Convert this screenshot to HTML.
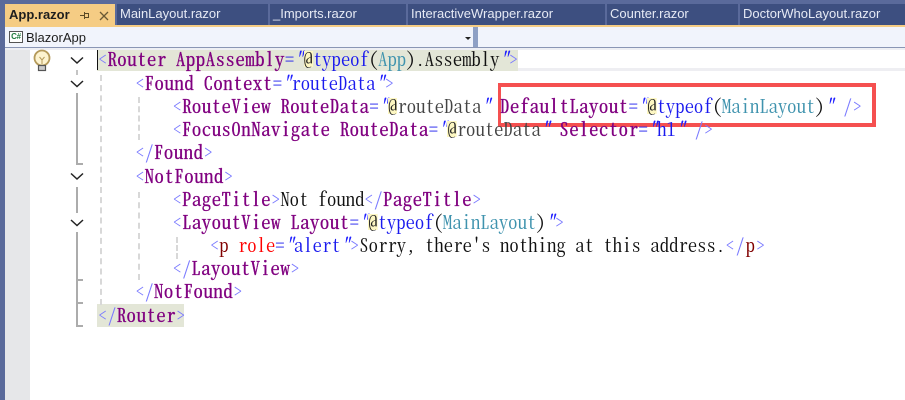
<!DOCTYPE html>
<html><head><meta charset="utf-8">
<style>
html,body{margin:0;padding:0}
body{width:905px;height:400px;overflow:hidden;position:relative;background:#fff;font-family:"Liberation Sans",sans-serif}
div{position:absolute;box-sizing:border-box}
.tab{top:4px;height:21px;background:#3d4f80;color:#e6eaf5;font-size:13px;line-height:20px;padding-left:3px;white-space:pre}
.l{left:98px;height:23px;line-height:22px;font-family:"Noto Serif CJK SC","Liberation Mono",monospace;font-feature-settings:"hwid";font-size:18.670px;white-space:pre;color:#111;z-index:6}
.l span{white-space:pre}
.b{color:#7a7aff}
.t{color:#800080;-webkit-text-stroke:.35px #800080;letter-spacing:.565px}
.a{color:#ff0000}
.q{color:#2020ff;font-style:italic}
.v{color:#1515ee}
.k{color:#1a1aee}
.c{color:#3f93ae}
.at{background:linear-gradient(#fdf7c2,#fdf7c2) center/100% 16px no-repeat;color:#222}
.dash{width:0;border-left:2px dashed #d8d8d8}
</style></head>
<body>
<div style="left:0;top:0;width:905px;height:47px;background:#5a6a9b"></div>
<div style="left:5px;top:4px;width:110px;height:23px;background:#f5cc84"></div>
<div style="left:9px;top:4px;font-size:13px;font-weight:bold;line-height:21px;color:#1e1e1e;z-index:2">App.razor</div>
<svg style="position:absolute;left:78px;top:8px;z-index:2" width="32" height="16" viewBox="0 0 32 16"><path d="M2 7.500H6M6.500 4V11M6.500 5.500H10.500V9.500H6.500" fill="none" stroke="#5b4a26" stroke-width="1"/><path d="M22 4L30 12M30 4L22 12" stroke="#6b5a36" stroke-width="1.300" fill="none"/></svg>

<div class="tab" style="left:117px;width:151px">MainLayout.razor</div>
<div class="tab" style="left:270px;width:136px">_Imports.razor</div>
<div class="tab" style="left:408px;width:197px">InteractiveWrapper.razor</div>
<div class="tab" style="left:607px;width:131px">Counter.razor</div>
<div class="tab" style="left:740px;width:165px">DoctorWhoLayout.razor</div>
<div style="left:5px;top:25px;width:900px;height:2px;background:#f5cc84"></div>

<div style="left:5px;top:27px;width:900px;height:20px;background:#8ea0c5"></div>
<div style="left:5px;top:27px;width:468px;height:20px;background:#f1f4fc"></div>
<div style="left:478px;top:27px;width:427px;height:20px;background:#f1f4fc"></div>
<div style="left:5px;top:47px;width:900px;height:1px;background:#8a96b5"></div>
<div style="left:5px;top:48px;width:900px;height:2px;background:#eeeff4"></div>
<div style="left:465px;top:37px;width:0;height:0;border-left:3.500px solid transparent;border-right:3.500px solid transparent;border-top:3.500px solid #222"></div>
<div style="left:9px;top:31px;width:14px;height:12px;border:1px solid #555;background:#fff;color:#1c7a3c;font:bold 8px/10px 'Liberation Sans',sans-serif;text-align:center;letter-spacing:-.3px">C#</div>
<div style="left:26px;top:28px;font-size:13px;line-height:19px;color:#1e1e1e">BlazorApp</div>

<div style="left:0;top:47px;width:5px;height:353px;background:#5a6a9b"></div>
<div style="left:5px;top:50px;width:25px;height:350px;background:#e6e7e9"></div>
<div style="left:97px;top:50px;width:808px;height:21px;border-bottom:3px solid #eeeef2"></div>
<div style="left:97px;top:50px;width:421px;height:21px;background:#e3e6d7"></div>
<div style="left:97px;top:304px;width:87px;height:23px;background:#e3e6d7"></div>
<div style="left:97px;top:50px;width:1px;height:20px;background:#111;z-index:7"></div>

<svg style="position:absolute;left:32px;top:49px" width="20" height="23" viewBox="0 0 20 23"><circle cx="10" cy="9" r="7.500" fill="#fdf3cf" stroke="#b59a5a" stroke-width="1.800"/><path d="M7.500 8L10 11L12.500 8M10 11V15" fill="none" stroke="#b59a5a" stroke-width="1"/><rect x="6.500" y="16.500" width="7" height="5" fill="#c9c9c9" stroke="#555" stroke-width="1.200"/></svg>

<svg style="position:absolute;left:68px;top:50px" width="18" height="285" viewBox="0 0 18 285" fill="none">
<g stroke="#222" stroke-width="1.500">
<path d="M3 7.500L9 13L15 7.500"/>
<path d="M3 31L9 36.500L15 31"/>
<path d="M3 123.500L9 129L15 123.500"/>
<path d="M3 170L9 175.500L15 170"/>
</g>
<g stroke="#acacac" stroke-width="2">
<path d="M9 20V25" stroke="#c4c4c4"/>
<path d="M9 43V114H15"/>
<path d="M9 137V163"/>
<path d="M9 182V276H15M9 230H15M9 253H15"/>
</g>
</svg>

<div class="dash" style="left:100px;top:75px;height:230px"></div>
<div class="dash" style="left:138px;top:97px;height:43px"></div>
<div class="dash" style="left:138px;top:192px;height:88px"></div>
<div class="dash" style="left:176px;top:237px;height:22px"></div>

<div class="l" style="top:48px"><span class="b">&lt;</span><span class="t">Router</span> <span class="t">AppAssembly</span><span class="v">=</span><span class="q">"</span><span class="at">@</span><span class="k">typeof</span>(<span class="c">App</span>).Assembly<span class="q">"</span><span class="b">&gt;</span></div>
<div class="l" style="top:72px">    <span class="b">&lt;</span><span class="t">Found</span> <span class="t">Context</span><span class="v">=</span><span class="q">"</span><span class="k">routeData</span><span class="q">"</span><span class="b">&gt;</span></div>
<div class="l" style="top:95px">        <span class="b">&lt;</span><span class="t">RouteView</span> <span class="t">RouteData</span><span class="v">=</span><span class="q">"</span><span class="at">@</span><span style="color:#444">routeData</span><span class="q">"</span> <span class="t">DefaultLayout</span><span class="v">=</span><span class="q">"</span><span class="at">@</span><span class="k">typeof</span>(<span class="c">MainLayout</span>)<span class="q">"</span> <span class="b">/&gt;</span></div>
<div class="l" style="top:118px">        <span class="b">&lt;</span><span class="t">FocusOnNavigate</span> <span class="t">RouteData</span><span class="v">=</span><span class="q">"</span><span class="at">@</span><span style="color:#444">routeData</span><span class="q">"</span> <span class="t">Selector</span><span class="v">=</span><span class="q">"</span><span class="k">h1</span><span class="q">"</span> <span class="b">/&gt;</span></div>
<div class="l" style="top:141px">    <span class="b">&lt;/</span><span class="t">Found</span><span class="b">&gt;</span></div>
<div class="l" style="top:165px">    <span class="b">&lt;</span><span class="t">NotFound</span><span class="b">&gt;</span></div>
<div class="l" style="top:188px">        <span class="b">&lt;</span><span class="t">PageTitle</span><span class="b">&gt;</span>Not found<span class="b">&lt;/</span><span class="t">PageTitle</span><span class="b">&gt;</span></div>
<div class="l" style="top:211px">        <span class="b">&lt;</span><span class="t">LayoutView</span> <span class="t">Layout</span><span class="v">=</span><span class="q">"</span><span class="at">@</span><span class="k">typeof</span>(<span class="c">MainLayout</span>)<span class="q">"</span><span class="b">&gt;</span></div>
<div class="l" style="top:234px">            <span class="b">&lt;</span><span style="color:#800000">p</span> <span class="a">role</span><span class="v">=</span><span class="q">"</span><span class="k">alert</span><span class="q">"</span><span class="b">&gt;</span><span style="letter-spacing:.06px">Sorry, there's nothing at this address.</span><span class="b" style="letter-spacing:.8px">&lt;/</span><span style="color:#800000;letter-spacing:.8px">p</span><span class="b">&gt;</span></div>
<div class="l" style="top:257px">        <span class="b">&lt;/</span><span class="t">LayoutView</span><span class="b">&gt;</span></div>
<div class="l" style="top:280px">    <span class="b">&lt;/</span><span class="t">NotFound</span><span class="b">&gt;</span></div>
<div class="l" style="top:304px"><span class="b">&lt;/</span><span class="t">Router</span><span class="b">&gt;</span></div>

<div style="left:498px;top:83px;width:378px;height:44px;border:4px solid #f55050;border-left-width:3.500px;z-index:5"></div>
</body></html>
